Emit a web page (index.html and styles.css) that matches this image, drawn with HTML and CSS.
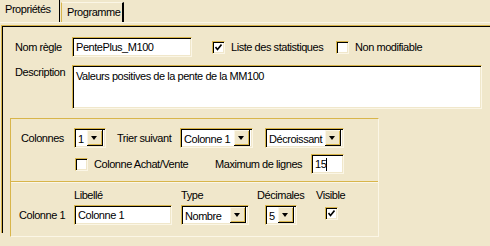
FILE: index.html
```html
<!DOCTYPE html>
<html lang="fr">

<head>
    <meta charset="UTF-8">
    <title>Règle</title>
    <link rel="stylesheet" href="styles.css">
</head>

<body>
    <div class="tabs">
        <div class="tab active">Propriétés</div>
        <div class="tab">Programme</div>
    </div>
    <div class="page">
        <div class="row first">
            <span class="lbl w57">Nom règle</span>
            <div class="field w120">PentePlus_M100</div>
            <span class="check checked ml20"><svg viewBox="0 0 7 7"><polyline points="0.5,3 2.5,5.5 6.5,0.5" /></svg></span>
            <span class="ctext w105">Liste des statistiques</span>
            <span class="check"></span>
            <span class="ctext">Non modifiable</span>
        </div>
        <div class="row desc">
            <span class="lbl w57 top">Description</span>
            <div class="field area">Valeurs positives de la pente de la MM100</div>
        </div>

        <div class="group">
            <div class="section sec1">
                <div class="row">
                    <span class="lbl w53">Colonnes</span>
                    <div class="combo w32"><span class="val">1</span><span class="btn"></span></div>
                    <span class="lbl w63 ml11">Trier suivant</span>
                    <div class="combo w73"><span class="val">Colonne 1</span><span class="btn"></span></div>
                    <div class="combo w79 ml12"><span class="val">Décroissant</span><span class="btn"></span></div>
                </div>
                <div class="row second">
                    <span class="check ml54"></span>
                    <span class="ctext w121">Colonne Achat/Vente</span>
                    <span class="lbl w96">Maximum de lignes</span>
                    <div class="field w33">15<span class="caret"></span></div>
                </div>
            </div>
            <div class="section sec2">
                <div class="row heads">
                    <span class="lbl w107 ml53">Libellé</span>
                    <span class="lbl w76">Type</span>
                    <span class="lbl w59">Décimales</span>
                    <span class="lbl">Visible</span>
                </div>
                <div class="row">
                    <span class="lbl w55 minus2">Colonne 1</span>
                    <div class="field w98">Colonne 1</div>
                    <div class="combo w68 ml9"><span class="val">Nombre</span><span class="btn"></span></div>
                    <div class="combo w32 ml16"><span class="val">5</span><span class="btn"></span></div>
                    <span class="check checked ml28 low"><svg viewBox="0 0 7 7"><polyline points="0.5,3 2.5,5.5 6.5,0.5" /></svg></span>
                </div>
            </div>
        </div>
    </div>
</body>

</html>
```

FILE: styles.css
```css
body {
    margin: 0;
    background-color: #f0e7cb;
    color: #000;
    font-family: "Liberation Sans", Arial, sans-serif;
    font-size: 11px;
    letter-spacing: -0.45px;
    width: 490px;
    height: 246px;
    overflow: hidden;
}

.tabs {
    display: flex;
    height: 22px;
    border-bottom: 1px solid #fbf6e6;
    margin-bottom: 2px;
    align-items: flex-end;
}

.tab {
    box-sizing: border-box;
    height: 20px;
    padding: 3px 0 0 5px;
    border-left: 1px solid #fbf6e6;
    border-top: 1px solid #fbf6e6;
    border-right: 2px solid #000;
}

.tab.active {
    width: 60px;
    height: 22px;
    padding-top: 3px;
    padding-left: 5px;
    border-left: none;
    border-top: none;
    border-right: 1px solid #000;
}

.tab + .tab {
    width: 63px;
    padding-left: 5px;
    margin-left: 1px;
    border-left: 1px solid #d8b54a;
}

.page {
    margin-left: 1px;
    border-top: 1px solid #d8b54a;
    border-left: 1px solid #d8b54a;
    box-shadow: inset 1px 1px 0 #000;
    padding: 11px 0 0 13px;
    height: 208px;
    box-sizing: border-box;
}

.row {
    display: flex;
    align-items: center;
}

.desc {
    margin-top: 8px;
    align-items: flex-start;
}

.lbl,
.ctext {
    white-space: nowrap;
    flex-shrink: 0;
}

.top {
    padding-top: 1px;
}

.ctext {
    margin-left: 6px;
}

.field,
.combo {
    box-sizing: border-box;
    height: 20px;
    background: #fff;
    border: 1px solid;
    border-color: #d8b54a #fbf6e6 #fbf6e6 #d8b54a;
    box-shadow: inset 1px 1px 0 #000, inset -1px -1px 0 #f0e7cb;
    padding: 3px 0 0 3px;
    flex-shrink: 0;
    white-space: nowrap;
    overflow: hidden;
}

.area {
    width: 410px;
    height: 44px;
    padding-top: 4px;
}

.caret {
    display: inline-block;
    width: 1px;
    height: 13px;
    background: #000;
    vertical-align: -3px;
}

.combo {
    display: flex;
    justify-content: space-between;
    padding: 0 2px 0 3px;
    align-items: center;
}

.combo .val {
    padding-top: 1px;
}

.btn {
    box-sizing: border-box;
    width: 16px;
    height: 16px;
    background: #f0e7cb;
    border-right: 1px solid #000;
    border-bottom: 1px solid #000;
    box-shadow: inset 1px 1px 0 #fbf6e6, inset -1px -1px 0 #d8b54a;
    position: relative;
    flex-shrink: 0;
}

.btn::after {
    content: "";
    position: absolute;
    left: 4px;
    top: 6px;
    border-left: 3.5px solid transparent;
    border-right: 3.5px solid transparent;
    border-top: 4px solid #000;
}

.check {
    box-sizing: border-box;
    width: 13px;
    height: 13px;
    background: #fff;
    border: 1px solid;
    border-color: #d8b54a #fbf6e6 #fbf6e6 #d8b54a;
    box-shadow: inset 1px 1px 0 #000, inset -1px -1px 0 #f0e7cb;
    flex-shrink: 0;
    padding: 2px;
}

.check svg {
    display: block;
    width: 7px;
    height: 7px;
    fill: none;
    stroke: #000;
    stroke-width: 1.6;
}

.group {
    margin: 9px 0 0 -5px;
    width: 369px;
    border-top: 1px solid #d8b54a;
    border-left: 1px solid #d8b54a;
    border-right: 1px solid #fbf6e6;
    border-bottom: 1px solid #fbf6e6;
    box-sizing: border-box;
}

.sec1 {
    height: 63px;
    padding: 9px 0 0 10px;
    box-sizing: border-box;
    border-bottom: 1px solid #d8b54a;
}

.second {
    margin-top: 6px;
}

.sec2 {
    border-top: 1px solid #fbf6e6;
    height: 54px;
    padding: 5px 0 0 10px;
    box-sizing: border-box;
}

.heads {
    height: 13px;
    margin-bottom: 4px;
}

.minus2 {
    margin-left: -2px;
}

.low {
    margin-top: -3px;
}

.w32 { width: 32px; }
.w33 { width: 33px; }
.w53 { width: 53px; }
.w55 { width: 55px; }
.w57 { width: 57px; }
.w59 { width: 59px; }
.w63 { width: 63px; }
.w68 { width: 68px; }
.w73 { width: 73px; }
.w76 { width: 76px; }
.w79 { width: 79px; }
.w96 { width: 96px; }
.w98 { width: 98px; }
.w105 { width: 105px; }
.w107 { width: 107px; }
.w120 { width: 120px; }
.w121 { width: 121px; }
.ml9 { margin-left: 9px; }
.ml11 { margin-left: 11px; }
.ml12 { margin-left: 12px; }
.ml16 { margin-left: 16px; }
.ml20 { margin-left: 20px; }
.ml28 { margin-left: 28px; }
.ml53 { margin-left: 53px; }
.ml54 { margin-left: 54px; }
```
